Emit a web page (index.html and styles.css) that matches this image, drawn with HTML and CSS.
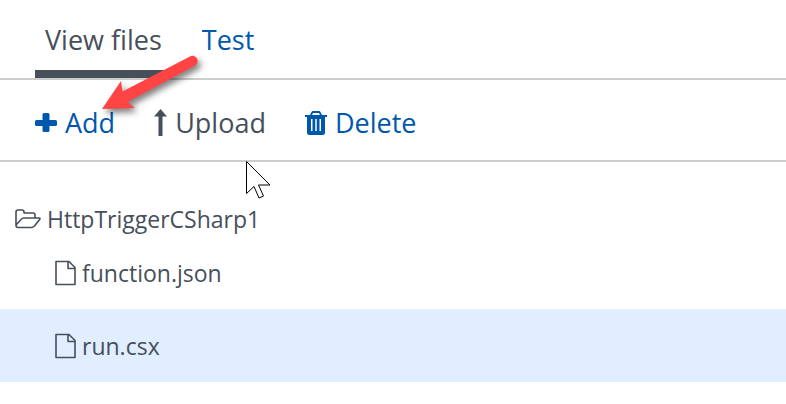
FILE: index.html
```html
<!DOCTYPE html>
<html lang="en">
<head>
<meta charset="utf-8">
<title>View files</title>
<link rel="stylesheet" href="styles.css">
</head>
<body>
<nav class="tabs">
  <a class="tab active" href="#files" aria-current="page">View files</a>
  <a class="tab" href="#test">Test</a>
</nav>
<div class="toolbar">
  <button class="action" type="button">
    <svg width="22" height="22" viewBox="0 0 22 22"><path fill="currentColor" d="M9 1h4q1.500 0 1.500 1.500V8H20.500Q22 8 22 9.500V12.500Q22 14 20.500 14H14.500V18.500Q14.500 20 13 20H9Q7.500 20 7.500 18.500V14H1.500Q0 14 0 12.500V9.500Q0 8 1.500 8H7.500V2.500Q7.500 1 9 1Z"/></svg>
    <span>Add</span>
  </button>
  <button class="action muted" type="button">
    <svg width="13" height="28" viewBox="0 0 13 28"><path fill="currentColor" d="M6.500 0L13 7.500H8.500V27H4.500V7.500H0Z"/></svg>
    <span>Upload</span>
  </button>
  <button class="action" type="button">
    <svg width="22" height="26" viewBox="0 0 22 26"><path fill="currentColor" fill-rule="evenodd" d="M0 5H5L6.500 2Q7 1 8 1H14Q15 1 15.500 2L17 5H22V7H20V22.500Q20 25 17.500 25H4.500Q2 25 2 22.500V7H0ZM7 5H15L14 3H8ZM6 9V21H7.500V9ZM10.250 9V21H11.750V9ZM14.500 9V21H16V9Z"/></svg>
    <span>Delete</span>
  </button>
</div>
<main class="tree">
  <a class="folder" href="#root">
    <svg width="26" height="20" viewBox="0 0 26 20"><path fill="none" stroke="currentColor" stroke-width="1.600" stroke-linejoin="round" d="M1 16V3Q1 1 3 1H7Q9 1 9 3V4H18Q20 4 20 6V9M1 16L6 10.500Q7.300 9 9 9H24Q25.700 9 24.600 10.500L19.500 17Q18 18.500 16.500 18.500H3Q1 18.500 1 16Z"/></svg>
    <span>HttpTriggerCSharp1</span>
  </a>
  <ul class="files">
    <li><a class="file" href="#function">
      <svg width="21" height="26" viewBox="0 0 21 26"><path fill="none" stroke="currentColor" stroke-width="1.600" stroke-linejoin="round" d="M1 1.500H14L20 7.500V24.500H1ZM13 1.500V8.500H20"/></svg>
      <span>function.json</span>
    </a></li>
    <li><a class="file selected" href="#run" aria-current="true">
      <svg width="21" height="26" viewBox="0 0 21 26"><path fill="none" stroke="currentColor" stroke-width="1.600" stroke-linejoin="round" d="M1 1.500H14L20 7.500V24.500H1ZM13 1.500V8.500H20"/></svg>
      <span>run.csx</span>
    </a></li>
  </ul>
</main>
<svg class="arrow" width="130" height="90" viewBox="0 0 130 90" aria-hidden="true"><path fill="#ff4444" d="M11 60L30 32L31.500 42.500L99 7.500A5 5 0 0 1 104 16.500L36.500 53L44 59Z"/></svg>
<svg class="pointer" width="28" height="42" viewBox="0 0 28 42" aria-hidden="true"><path fill="#fff" stroke="#000" d="M1.500 1.500V33.500L9 26.500L14 38L18.500 36L13.500 25H25Z"/></svg>
</body>
</html>
```
FILE: styles.css
```css
body {
  margin: 0;
  background: #fff;
  color: #464f5a;
  font-family: "Segoe UI", "Open Sans", "Noto Sans", sans-serif;
  font-size: 27px;
}

a {
  color: inherit;
  text-decoration: none;
}

svg {
  display: block;
  flex: none;
}

.tabs {
  display: flex;
  gap: 20px;
  padding: 0 35px;
  border-bottom: 2px solid #ccc;
}

.tab {
  padding: 20px 10px 10px;
  border-bottom: 8px solid transparent;
  line-height: 40px;
  color: #0058ad;
}

.tab.active {
  color: #464f5a;
  border-color: #464f5a;
}

.toolbar {
  display: flex;
  gap: 39px;
  padding: 23px 35px 17px;
  border-bottom: 2px solid #ccc;
}

.action {
  display: flex;
  align-items: center;
  gap: 8px;
  padding: 0;
  border: 0;
  background: none;
  color: #0058ad;
  font: inherit;
  line-height: 40px;
}

.action.muted {
  color: #464f5a;
}

.tree {
  padding-top: 40px;
  font-size: 23px;
}

.folder {
  display: flex;
  align-items: center;
  gap: 6px;
  padding-left: 15px;
  line-height: 34px;
}

.files {
  margin: 0;
  padding: 0;
  list-style: none;
}

.file {
  display: flex;
  align-items: center;
  gap: 6px;
  padding: 19px 0 18px 55px;
  line-height: 36px;
}

.selected {
  background: #e0eeff;
}

.arrow,
.pointer {
  position: absolute;
  pointer-events: none;
}

.arrow {
  top: 49px;
  left: 91px;
  filter: drop-shadow(3px 4px 3px rgba(0, 0, 0, 0.5));
}

.pointer {
  top: 160px;
  left: 245px;
}
```
